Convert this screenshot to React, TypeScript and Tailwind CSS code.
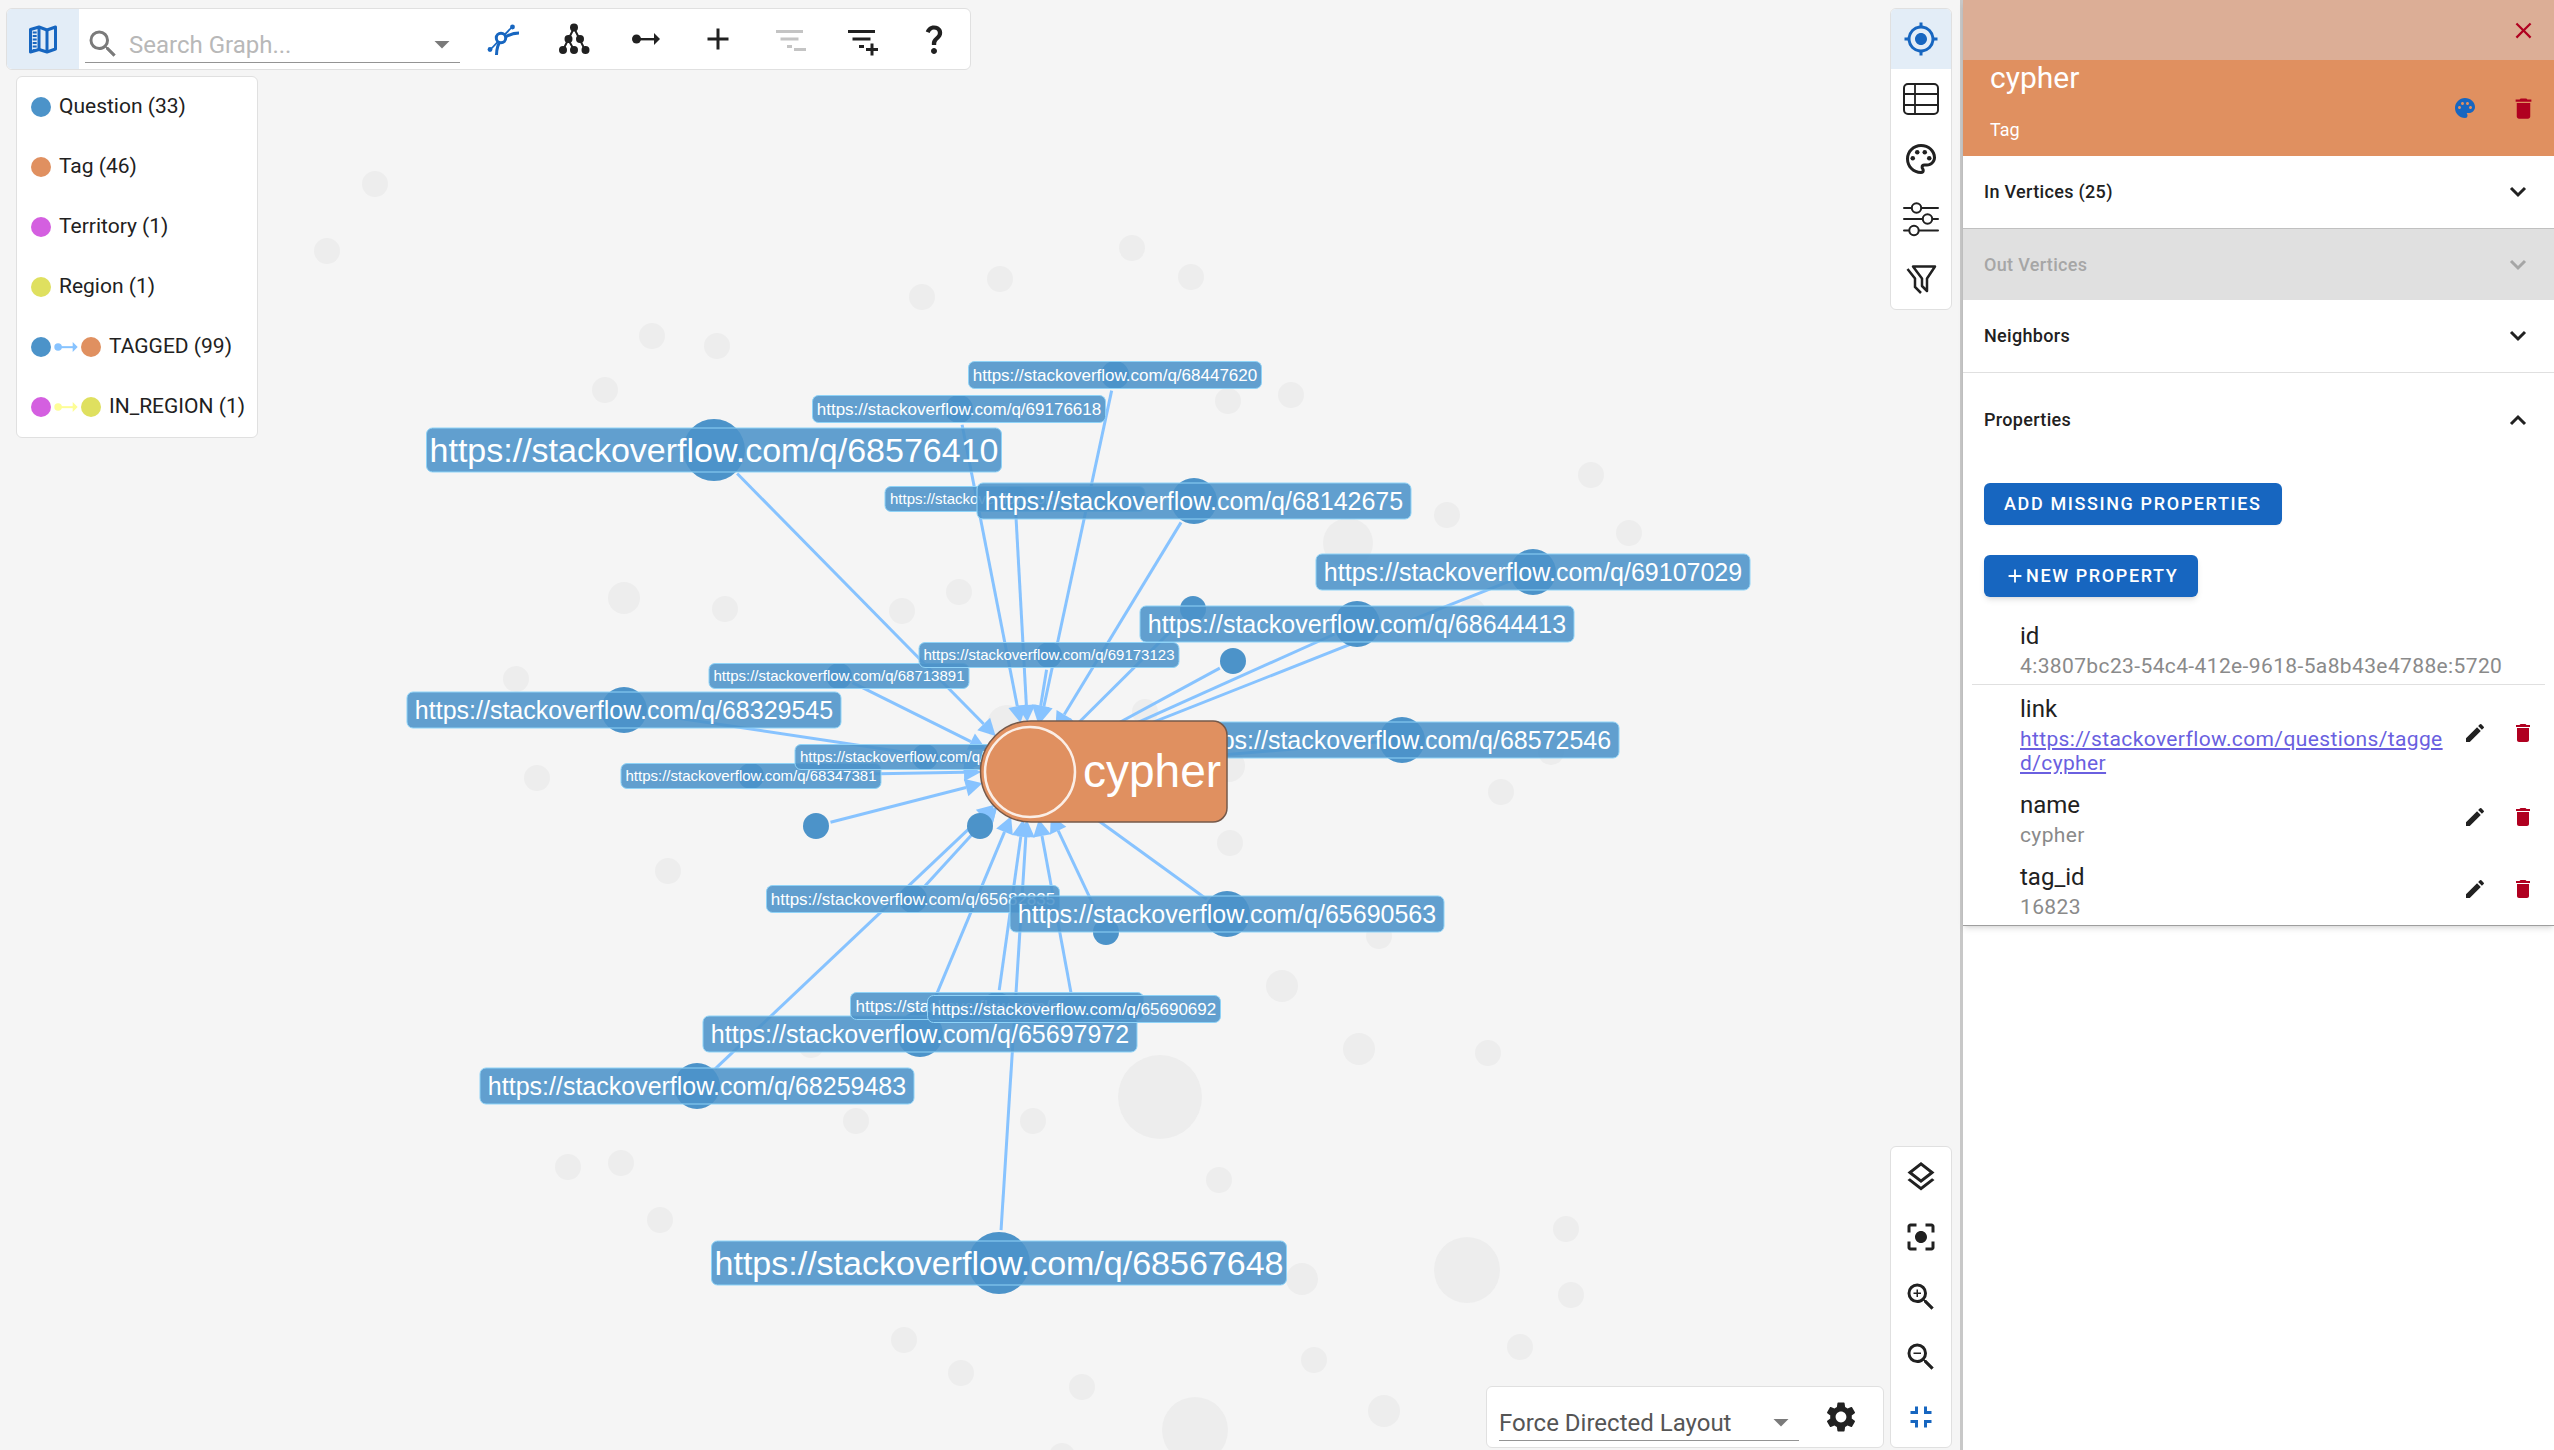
import { useState } from "react";
import type { ReactNode } from "react";
import clsx from "clsx";
import {
  MdAdd,
  MdArrowDropDown,
  MdCenterFocusStrong,
  MdClose,
  MdDelete,
  MdEdit,
  MdFullscreenExit,
  MdGpsFixed,
  MdOutlineLayers,
  MdOutlinePalette,
  MdPalette,
  MdQuestionMark,
  MdSearch,
  MdSettings,
  MdZoomIn,
  MdZoomOut,
} from "react-icons/md";

const QUESTION = "#4c93c9";
const EDGE = "#87c3ff";
const HUB = { x: 1030, y: 771 };

type LabelSize = "xs" | "sm" | "md" | "lg";

const LABEL: Record<LabelSize, { w: number; h: number; font: number; r: number }> = {
  xs: { w: 260, h: 25, font: 15, r: 13 },
  sm: { w: 293, h: 27, font: 17, r: 14 },
  md: { w: 434, h: 36, font: 25, r: 23 },
  lg: { w: 575, h: 44, font: 34, r: 31 },
};

type GraphNode = { x: number; y: number; id?: string; size?: LabelSize };

// x / y are node centres, later entries are drawn on top
const NODES: GraphNode[] = [
  { x: 1193, y: 609 },
  { x: 1233, y: 661 },
  { x: 816, y: 826 },
  { x: 980, y: 826 },
  { x: 1106, y: 932 },
  { x: 1115, y: 375, id: "68447620", size: "sm" },
  { x: 959, y: 409, id: "69176618", size: "sm" },
  { x: 714, y: 450, id: "68576410", size: "lg" },
  { x: 1015, y: 499, id: "", size: "xs" },
  { x: 1194, y: 501, id: "68142675", size: "md" },
  { x: 1533, y: 572, id: "69107029", size: "md" },
  { x: 839, y: 676, id: "68713891", size: "xs" },
  { x: 1049, y: 655, id: "69173123", size: "xs" },
  { x: 1357, y: 624, id: "68644413", size: "md" },
  { x: 624, y: 710, id: "68329545", size: "md" },
  { x: 751, y: 776, id: "68347381", size: "xs" },
  { x: 925, y: 757, id: "", size: "xs" },
  { x: 1402, y: 740, id: "68572546", size: "md" },
  { x: 913, y: 899, id: "65682835", size: "sm" },
  { x: 1227, y: 914, id: "65690563", size: "md" },
  { x: 920, y: 1034, id: "65697972", size: "md" },
  { x: 997, y: 1006, id: "", size: "sm" },
  { x: 1074, y: 1009, id: "65690692", size: "sm" },
  { x: 697, y: 1086, id: "68259483", size: "md" },
  { x: 999, y: 1263, id: "68567648", size: "lg" },
];

// nodes outside of the highlighted neighbourhood: [x, y, r]
const FADED: [number, number, number][] = [
  [375, 184, 13], [327, 251, 13], [1132, 248, 13], [1000, 279, 13], [1191, 277, 13],
  [922, 297, 13], [652, 336, 13], [717, 346, 13], [605, 390, 13], [1228, 401, 13],
  [1291, 395, 13], [1591, 475, 13], [1447, 515, 13], [1629, 533, 13], [1348, 543, 25],
  [624, 598, 16], [725, 609, 13], [902, 611, 13], [959, 592, 13], [516, 679, 13],
  [668, 871, 13], [537, 778, 13], [1501, 792, 13], [1230, 843, 13], [1007, 725, 20],
  [1145, 712, 13], [1229, 766, 16], [1379, 936, 13], [1282, 986, 16], [1359, 1049, 16],
  [1488, 1053, 13], [1160, 1097, 42], [1033, 1121, 13], [856, 1121, 13], [568, 1167, 13],
  [621, 1163, 13], [660, 1220, 13], [1219, 1180, 13], [1467, 1270, 33], [1566, 1229, 13],
  [1571, 1295, 13], [1520, 1347, 13], [1302, 1279, 16], [1314, 1360, 13], [1384, 1411, 16],
  [904, 1340, 13], [961, 1373, 13], [1082, 1387, 13], [1195, 1430, 33], [1062, 1456, 13],
  [811, 1045, 13], [1472, 611, 13], [1551, 752, 13],
];

function Edge({ node }: { node: GraphNode }) {
  const dx = HUB.x - node.x;
  const dy = HUB.y - node.y;
  const len = Math.hypot(dx, dy);
  const ux = dx / len;
  const uy = dy / len;
  const start = (node.size ? LABEL[node.size].r : 13) + 2;
  const tip = { x: HUB.x - ux * 49, y: HUB.y - uy * 49 };
  const base = { x: tip.x - ux * 17, y: tip.y - uy * 17 };

  return (
    <g fill={EDGE} stroke={EDGE}>
      <line x1={node.x + ux * start} y1={node.y + uy * start} x2={base.x} y2={base.y} strokeWidth={3} />
      <polygon
        stroke="none"
        points={`${tip.x},${tip.y} ${base.x - uy * 9},${base.y + ux * 9} ${base.x + uy * 9},${base.y - ux * 9}`}
      />
    </g>
  );
}

function Vertex({ node }: { node: GraphNode }) {
  const label = node.size ? LABEL[node.size] : null;
  if (!label) return <circle cx={node.x} cy={node.y} r={13} fill={QUESTION} />;

  const left = node.x - label.w / 2;
  return (
    <g>
      <circle cx={node.x} cy={node.y} r={label.r} fill={QUESTION} />
      <rect
        x={left}
        y={node.y - label.h / 2}
        width={label.w}
        height={label.h}
        rx={6}
        fill={QUESTION}
        fillOpacity={0.88}
        stroke="#8fd3f7"
        strokeWidth={1}
      />
      <text
        x={node.id ? node.x : left + 5}
        y={node.y}
        dy="0.34em"
        textAnchor={node.id ? "middle" : "start"}
        fontSize={label.font}
        fill="#fff"
      >
        https://stackoverflow.com/q/{node.id}
      </text>
    </g>
  );
}

function GraphCanvas() {
  return (
    <svg className="absolute inset-0 h-full w-full font-['Liberation_Sans',Arial,sans-serif]">
      {FADED.map(([x, y, r]) => (
        <circle key={`${x}-${y}`} cx={x} cy={y} r={r} fill="#ededed" />
      ))}
      {NODES.map((n) => (
        <Edge key={`${n.x}-${n.y}`} node={n} />
      ))}
      {NODES.map((n) => (
        <Vertex key={`${n.x}-${n.y}`} node={n} />
      ))}
      <path
        d="M1031 721H1213a14 14 0 0 1 14 14V808a14 14 0 0 1 -14 14H1031a50.5 50.5 0 0 1 0 -101Z"
        fill="#e09060"
        stroke="#75594a"
        strokeWidth={1.5}
      />
      <circle cx={1030} cy={772} r={45} fill="none" stroke="#fbeee6" strokeWidth={2.5} />
      <text x={1083} y={787} fontSize={46} fill="#fff">cypher</text>
    </svg>
  );
}

/* ---------- icons ---------- */

function MapIcon() {
  return (
    <svg width="36" height="36" viewBox="0 0 36 36" fill="none" stroke="currentColor" strokeWidth="3" strokeLinejoin="round">
      <path d="M5.5 8.5L14 6L22 9L30.5 6V28L22 31L14 28.5L5.5 31Z" />
      <path d="M14 6V28.5M22 9V31" />
      <path d="M9.7 10.5V29" strokeDasharray="2 1.5" strokeWidth="4" />
    </svg>
  );
}

function StructureIcon() {
  return (
    <svg width="36" height="36" viewBox="0 0 36 36" fill="none" stroke="currentColor">
      <path d="M6 29L28 6" strokeWidth="1.8" />
      <path d="M12.500 34C12.500 27 14 23 17 19C22 15 27 12 35 12" strokeWidth="3" />
      <circle cx="17" cy="17" r="4.700" fill="#fff" strokeWidth="3" />
      <circle cx="6" cy="28.500" r="2.400" fill="currentColor" stroke="none" />
      <circle cx="28.500" cy="6" r="2.400" fill="currentColor" stroke="none" />
    </svg>
  );
}

function TreeIcon() {
  return (
    <svg width="36" height="36" viewBox="0 0 36 36" fill="currentColor" stroke="currentColor" strokeWidth="2">
      <path d="M18 7L7 29M18 7L29 29M12 18L18 29" fill="none" />
      <circle cx="18" cy="6.5" r="3" />
      <circle cx="12.5" cy="18" r="3" />
      <circle cx="24" cy="18" r="3" />
      <circle cx="7" cy="29" r="3" />
      <circle cx="18" cy="29" r="3" />
      <circle cx="29.5" cy="29" r="3" />
    </svg>
  );
}

function ArrowIcon({ className }: { className?: string }) {
  return (
    <svg className={className} viewBox="0 0 28 12" fill="currentColor">
      <circle cx="4.5" cy="6" r="4.5" />
      <rect x="6" y="5" width="18" height="2.4" />
      <path d="M22 0L28 6L22 12Z" />
    </svg>
  );
}

function FilterLinesIcon({ plus = false }: { plus?: boolean }) {
  return (
    <svg width="36" height="36" viewBox="0 0 36 36" fill="currentColor">
      <path d="M4 9h27v3H4zM8.5 16.5h18v3h-18zM15 24h5v3h-5z" />
      <path d={plus ? "M22 27h4.500v-4.500h3V27H34v3h-4.500v4.500h-3V30H22z" : "M22 27h12v3H22z"} />
    </svg>
  );
}

function TableIcon() {
  return (
    <svg width="36" height="36" viewBox="0 0 36 36" fill="none" stroke="currentColor" strokeWidth="2">
      <rect x="1" y="3" width="34" height="30" rx="4" />
      <path d="M12 3V33M1 13H35M1 24H35" strokeWidth="1.8" />
    </svg>
  );
}

function SlidersIcon() {
  return (
    <svg width="36" height="36" viewBox="0 0 36 36" fill="#fff" stroke="currentColor" strokeWidth="2" strokeLinecap="round">
      <path d="M1 7H35M1 18H35M1 29.5H35" />
      <circle cx="13.5" cy="7" r="4.7" />
      <circle cx="24.5" cy="18" r="4.7" />
      <circle cx="11" cy="29.5" r="4.7" />
    </svg>
  );
}

function FunnelIcon() {
  return (
    <svg width="36" height="36" viewBox="0 0 36 36" fill="none" stroke="currentColor" strokeWidth="2.5">
      <path d="M10 5.5H32L24 17.5V30L19 25V17.5Z" strokeLinejoin="round" />
      <path d="M4.5 8L12 17.5V26L18 32" />
    </svg>
  );
}

function Chevron({ up = false }: { up?: boolean }) {
  return (
    <svg width="24" height="24" viewBox="0 0 24 24" fill="none" stroke="currentColor" strokeWidth="3">
      <path d={up ? "M5 16L12 9L19 16" : "M5 8L12 15L19 8"} />
    </svg>
  );
}

/* ---------- chrome ---------- */

function IconButton({
  label,
  active,
  blue,
  disabled,
  wide,
  children,
}: {
  label: string;
  active?: boolean;
  blue?: boolean;
  disabled?: boolean;
  wide?: boolean;
  children: ReactNode;
}) {
  return (
    <button
      type="button"
      aria-label={label}
      disabled={disabled}
      className={clsx(
        "flex h-[60px] shrink-0 items-center justify-center",
        wide ? "w-[72px]" : "w-[60px]",
        active && "bg-[#e3edf7]",
        active || blue ? "text-[#1766c0]" : disabled ? "text-[#c4c4c4]" : "text-[#212121]",
      )}
    >
      {children}
    </button>
  );
}

function TopBar() {
  return (
    <div className="flex w-fit overflow-hidden rounded-md border border-[#e0e0e0] bg-white">
      <IconButton label="Legend" active wide><MapIcon /></IconButton>
      <div className="mx-1.5 flex h-[54px] w-[375px] items-end border-b border-[#949494]">
        <label htmlFor="search" className="text-[#7a7a7a]"><MdSearch size={36} /></label>
        <input
          id="search"
          placeholder="Search Graph..."
          className="ml-2 h-[34px] min-w-0 flex-1 text-2xl outline-none placeholder:text-[#b8b8b8]"
        />
        <button type="button" aria-label="Open suggestions" className="text-[#7a7a7a]">
          <MdArrowDropDown size={36} />
        </button>
      </div>
      <IconButton label="Structure layout" blue wide><StructureIcon /></IconButton>
      <IconButton label="Hierarchy" wide><TreeIcon /></IconButton>
      <IconButton label="Edges" wide><ArrowIcon className="h-3 w-7" /></IconButton>
      <IconButton label="Add" wide><MdAdd size={36} /></IconButton>
      <IconButton label="Remove filter" disabled wide><FilterLinesIcon /></IconButton>
      <IconButton label="Add filter" wide><FilterLinesIcon plus /></IconButton>
      <IconButton label="Help" wide><MdQuestionMark size={36} /></IconButton>
    </div>
  );
}

function Dot({ className }: { className: string }) {
  return <span className={clsx("h-5 w-5 rounded-full", className)} />;
}

function Legend() {
  const row = "flex h-[60px] items-center";
  return (
    <ul className="mt-1.5 ml-2.5 w-fit rounded-md border border-[#e0e0e0] bg-white pr-3 pl-3.5 text-[21px] text-[#212121]">
      <li className={row}><Dot className="mr-2 bg-[#4c93c9]" />Question (33)</li>
      <li className={row}><Dot className="mr-2 bg-[#e09060]" />Tag (46)</li>
      <li className={row}><Dot className="mr-2 bg-[#d45fe0]" />Territory (1)</li>
      <li className={row}><Dot className="mr-2 bg-[#dfe05f]" />Region (1)</li>
      <li className={row}>
        <Dot className="bg-[#4c93c9]" />
        <ArrowIcon className="mx-[3px] h-2.5 w-6 text-[#87c3ff]" />
        <Dot className="mr-2 bg-[#e09060]" />TAGGED (99)
      </li>
      <li className={row}>
        <Dot className="bg-[#d45fe0]" />
        <ArrowIcon className="mx-[3px] h-2.5 w-6 text-[#fdfd96]" />
        <Dot className="mr-2 bg-[#dfe05f]" />IN_REGION (1)
      </li>
    </ul>
  );
}

function LayoutPicker() {
  return (
    <div className="flex h-[62px] items-start gap-1.5 rounded-md border border-[#e0e0e0] bg-white pr-1.5 pl-3">
      <div className="relative h-[54px] w-[300px] border-b border-[#949494]">
        <select
          aria-label="Layout"
          className="h-full w-full appearance-none pt-[18px] text-2xl text-[#555] outline-none"
        >
          <option>Force Directed Layout</option>
        </select>
        <MdArrowDropDown size={36} className="pointer-events-none absolute right-0 bottom-0 text-[#7a7a7a]" />
      </div>
      <IconButton label="Layout settings" wide><MdSettings size={36} /></IconButton>
    </div>
  );
}

function SideBar({ children }: { children: ReactNode }) {
  return (
    <div className="flex flex-col overflow-hidden rounded-md border border-[#e0e0e0] bg-white">
      {children}
    </div>
  );
}

/* ---------- details drawer ---------- */

function Section({ title, disabled, open }: { title: string; disabled?: boolean; open?: boolean }) {
  return (
    <button
      type="button"
      disabled={disabled}
      aria-expanded={!!open}
      className={clsx(
        "flex w-full items-center justify-between pr-6 pl-[21px] text-lg font-medium tracking-[0.018em]",
        open ? "h-[94px]" : "h-[72px]",
        disabled ? "border-t border-[#c0c0c0] bg-[#e0e0e0] text-[#a6a6a6]" : "text-[#212121]",
      )}
    >
      {title}
      <Chevron up={open} />
    </button>
  );
}

function Property({ name, children, readOnly }: { name: string; children: ReactNode; readOnly?: boolean }) {
  return (
    <div className={clsx("flex items-center pr-2.5 pl-12", readOnly && "border-b border-[#e0e0e0]")}>
      <dl className="min-w-0 flex-1 py-1.5">
        <dt className="text-2xl leading-9 text-[#212121]">{name}</dt>
        <dd className="text-[21px] leading-6 tracking-[0.018em] break-all text-[#8a8a8a]">{children}</dd>
      </dl>
      {!readOnly && (
        <div className="ml-5 flex gap-6">
          <button type="button" aria-label={`Edit ${name}`} className="text-[#212121]"><MdEdit size={24} /></button>
          <button type="button" aria-label={`Delete ${name}`} className="text-[#b00020]"><MdDelete size={24} /></button>
        </div>
      )}
    </div>
  );
}

const primaryButton =
  "flex h-[42px] items-center rounded-md bg-[#1766c0] px-5 text-lg font-medium tracking-[0.09em] text-white";

function Drawer({ onClose }: { onClose: () => void }) {
  return (
    <aside className="w-[594px] shrink-0 border-l-[3px] border-[#c8c8c8] bg-white">
      <div className="border-b border-[#9e9e9e] shadow-md">
        <div className="flex h-[60px] items-center justify-end bg-[#dcae96] pr-[17px]">
          <button type="button" aria-label="Close" onClick={onClose} className="text-[#b00020]">
            <MdClose size={27} />
          </button>
        </div>
        <header className="flex h-24 items-center justify-between bg-[#e09060] pr-[17px] pl-[27px] text-white">
          <div className="flex h-full flex-col justify-between pb-3">
            <h1 className="text-3xl leading-9">cypher</h1>
            <p className="text-lg leading-7">Tag</p>
          </div>
          <div className="flex items-center gap-[33px]">
            <button type="button" aria-label="Change color" className="text-[#1766c0]"><MdPalette size={24} /></button>
            <button type="button" aria-label="Delete vertex" className="text-[#b00020]"><MdDelete size={27} /></button>
          </div>
        </header>

        <Section title="In Vertices (25)" />
        <Section title="Out Vertices" disabled />
        <Section title="Neighbors" />
        <div className="border-t border-[#e0e0e0]">
          <Section title="Properties" open />
          <div className="flex flex-col items-start gap-[30px] px-[21px] pt-4 pb-[15px]">
            <button type="button" className={clsx(primaryButton, "shadow-xs")}>ADD MISSING PROPERTIES</button>
            <button type="button" className={clsx(primaryButton, "shadow-md")}>
              <MdAdd size={22} />
              NEW PROPERTY
            </button>
          </div>
          <div className="px-[9px]">
            <Property name="id" readOnly>4:3807bc23-54c4-412e-9618-5a8b43e4788e:5720</Property>
            <Property name="link">
              <a href="https://stackoverflow.com/questions/tagged/cypher" className="text-[#6a5fe0] underline">
                https://stackoverflow.com/questions/tagged/cypher
              </a>
            </Property>
            <Property name="name">cypher</Property>
            <Property name="tag_id">16823</Property>
          </div>
        </div>
      </div>
    </aside>
  );
}

export default function App() {
  const [drawerOpen, setDrawerOpen] = useState(true);

  return (
    <div className="flex h-screen overflow-hidden bg-[#f5f5f5] font-[Roboto,sans-serif]">
      <main className="relative min-w-0 flex-1 overflow-hidden">
        <GraphCanvas />
        <div className="relative flex h-full justify-between pt-2 pr-2 pb-0.5 pl-1.5">
          <div>
            <TopBar />
            <Legend />
          </div>
          <div className="flex items-end gap-1.5">
            <LayoutPicker />
            <div className="flex h-full flex-col justify-between">
              <SideBar>
                <IconButton label="Selection details" active><MdGpsFixed size={36} /></IconButton>
                <IconButton label="Table"><TableIcon /></IconButton>
                <IconButton label="Styles"><MdOutlinePalette size={36} /></IconButton>
                <IconButton label="Settings"><SlidersIcon /></IconButton>
                <IconButton label="Filters"><FunnelIcon /></IconButton>
              </SideBar>
              <SideBar>
                <IconButton label="Layers"><MdOutlineLayers size={36} /></IconButton>
                <IconButton label="Fit to screen"><MdCenterFocusStrong size={36} /></IconButton>
                <IconButton label="Zoom in"><MdZoomIn size={36} /></IconButton>
                <IconButton label="Zoom out"><MdZoomOut size={36} /></IconButton>
                <IconButton label="Exit full screen" blue><MdFullscreenExit size={36} /></IconButton>
              </SideBar>
            </div>
          </div>
        </div>
      </main>
      {drawerOpen && <Drawer onClose={() => setDrawerOpen(false)} />}
    </div>
  );
}
